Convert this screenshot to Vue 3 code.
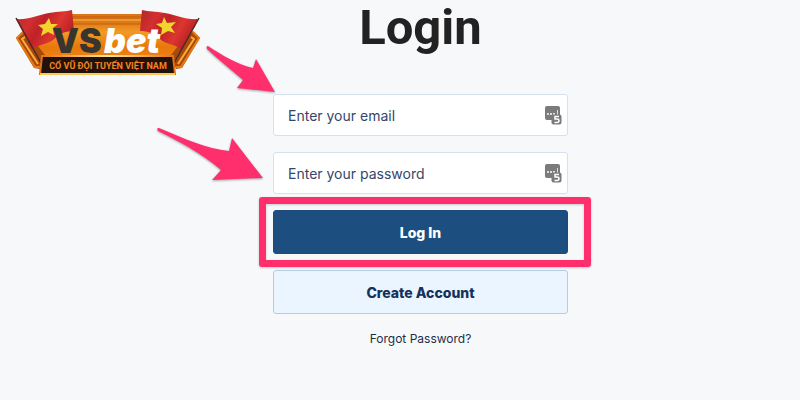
<template>
  <div class="page">
    <svg class="logo" viewBox="0 0 196 76" role="img" aria-label="VSbet">
      <defs>
        <linearGradient id="plate" x1="0" y1="0" x2="0" y2="1">
          <stop offset="0" stop-color="#c9610c" />
          <stop offset="0.35" stop-color="#f39a25" />
          <stop offset="0.65" stop-color="#e8780c" />
          <stop offset="1" stop-color="#f08a18" />
        </linearGradient>
        <linearGradient id="flag" x1="0" y1="0" x2="1" y2="0.4">
          <stop offset="0" stop-color="#b3262a" />
          <stop offset="0.3" stop-color="#d42f30" />
          <stop offset="0.5" stop-color="#bd2227" />
          <stop offset="0.75" stop-color="#dc3630" />
          <stop offset="1" stop-color="#b82024" />
        </linearGradient>
        <linearGradient id="rim" x1="0" y1="0" x2="1" y2="0">
          <stop offset="0" stop-color="#e5700f" />
          <stop offset="0.5" stop-color="#ffe89a" />
          <stop offset="1" stop-color="#e5700f" />
        </linearGradient>
      </defs>
      <!-- main plate -->
      <path d="M60 9 H130 L175 28 L164 60 H28 L18 28 Z" fill="url(#plate)" />
      <path d="M60 10 H130" stroke="#e88a22" stroke-width="1" />
      <path d="M60 15 H130" stroke="#ffbe55" stroke-width="1" />
      <path d="M60 19 H130" stroke="#c95c08" stroke-width="1" />
      <!-- side wings -->
      <path d="M11 26 L4 33 L22 63 L28 64 L33 50 L22 36 Z" fill="#a84a0c" />
      <path d="M11 27 L5 33 L23 62 L28 62" fill="none" stroke="#e87a16" stroke-width="2" />
      <path d="M13 32 L10 34 L26 59" fill="none" stroke="#ffab38" stroke-width="2" />
      <path d="M181 26 L188 33 L170 63 L164 64 L159 50 L170 36 Z" fill="#a84a0c" />
      <path d="M181 27 L187 33 L169 62 L164 62" fill="none" stroke="#e87a16" stroke-width="2" />
      <path d="M179 32 L182 34 L166 59" fill="none" stroke="#ffab38" stroke-width="2" />
      <!-- flags -->
      <path d="M4 14 C16 15 26 10 37 8 C47 6 53 7 60 5 L62 26 C54 26 48 28 42 34 C36 40 28 38 20 45 Z" fill="url(#flag)" />
      <path d="M4 13 L29 58" stroke="#4a2b24" stroke-width="1.500" />
      <path d="M186 14 C174 15 164 10 153 8 C143 6 137 7 130 5 L128 26 C136 26 142 28 148 34 C154 40 162 38 170 45 Z" fill="url(#flag)" />
      <path d="M187 13 L162 58" stroke="#4a2b24" stroke-width="1.500" />
      <path d="M37 13 L39 19 L46 19 L41 23 L42 30 L36 27 L29 31 L31 24 L26 20 L33 19 Z" fill="#f3d42c" />
      <path d="M152 12 L155 18 L164 17 L159 22 L163 28 L156 26 L149 30 L150 23 L144 19 L150 18 Z" fill="#f3d42c" />
      <!-- banner -->
      <path d="M30 51 H161 L163 69 H28 Z" fill="#21130c" stroke="url(#rim)" stroke-width="2" />
      <path d="M28 69 H163" stroke="#ffc65a" stroke-width="2" />
      <text class="logo-dark" x="40" y="48">VS</text>
      <text class="logo-light" x="92" y="48">bet</text>
      <text class="logo-slogan" x="96" y="64" text-anchor="middle">CỔ VŨ ĐỘI TUYỂN VIỆT NAM</text>
    </svg>

    <main class="login">
      <h1 class="title">Login</h1>
      <form class="form" @submit.prevent>
        <div v-for="field in fields" :key="field.name" class="field">
          <input
            v-model="field.value"
            class="input"
            :type="field.name"
            :name="field.name"
            :placeholder="field.label"
            :aria-label="field.label"
          />
          <svg class="key-icon" viewBox="0 0 18 19" aria-hidden="true">
            <rect x="0" y="0" width="15" height="14" rx="2" fill="#7b7b7b" />
            <path d="M2 7h2v2H2zM5 7h2v2H5zM8 7h2v2H8zM12 4h1v5h-1z" fill="#ddd" />
            <rect x="6.500" y="8.500" width="10" height="10" rx="2" fill="#7b7b7b" />
            <path d="M14 10.500H10V13H12Q14 13 14 14.700T12 16.500H9.500" fill="none" stroke="#fff" stroke-width="1.500" />
          </svg>
          <svg :class="['arrow', `arrow-${field.name}`]" :viewBox="field.arrow.box" aria-hidden="true">
            <path :d="field.arrow.path" />
          </svg>
        </div>
        <div class="submit">
          <button type="submit" class="btn btn-primary">Log In</button>
          <span class="highlight"></span>
        </div>
        <button type="button" class="btn btn-secondary">Create Account</button>
      </form>
      <a class="forgot" href="#">Forgot Password?</a>
    </main>
  </div>
</template>

<script setup>
import { reactive } from 'vue';

const fields = reactive([
  {
    name: 'email',
    label: 'Enter your email',
    value: '',
    arrow: {
      box: '0 0 80 60',
      path: 'M8 6 C22 15 38 25 53 28 L56 19 L75 52 L37 48 L43 40 C31 30 18 19 7 9 Q6 6 8 6 Z'
    }
  },
  {
    name: 'password',
    label: 'Enter your password',
    value: '',
    arrow: {
      box: '0 0 120 70',
      path: 'M9 8 C33 18 57 29 79 31 L82 18 L113 58 L62 60 L71 50 C50 32 28 21 8 11 Q6 8 9 8 Z'
    }
  }
]);
</script>

<style>
body {
  margin: 0;
  background: #f7f8fa;
}
</style>

<style scoped>
.page {
  position: relative;
  min-height: 100vh;
  box-sizing: border-box;
  padding-left: 41px;
  background: #f7f8fa;
  font-family: Inter, "Liberation Sans", sans-serif;
  overflow: hidden;
}

.logo {
  position: absolute;
  top: 5px;
  left: 12px;
  width: 196px;
  height: 76px;
}

.logo-dark,
.logo-light {
  font-size: 34px;
  font-weight: 900;
}

.logo-dark {
  fill: #38352f;
}

.logo-light {
  fill: #fff;
  font-style: italic;
}

.logo-slogan {
  fill: #f58220;
  font-family: Roboto, sans-serif;
  font-size: 9px;
  font-weight: 700;
}

.login {
  display: flex;
  flex-direction: column;
  align-items: center;
}

.title {
  margin: 0 0 38px;
  color: #222;
  font-family: Roboto, sans-serif;
  font-size: 49px;
  font-weight: 700;
  line-height: 56px;
}

.form {
  display: flex;
  flex-direction: column;
  gap: 16px;
  width: 100%;
  max-width: 295px;
}

.field,
.submit {
  position: relative;
  display: flex;
}

.input {
  width: 100%;
  height: 42px;
  box-sizing: border-box;
  padding: 0 40px 0 14px;
  border: 1px solid #d3e2ee;
  border-radius: 3px;
  background: #fff;
  color: #34466b;
  font-family: inherit;
  font-size: 14px;
}

.input::placeholder {
  color: #34466b;
  opacity: 1;
}

.key-icon {
  position: absolute;
  top: 12px;
  right: 5px;
  width: 18px;
  height: 19px;
}

.arrow {
  position: absolute;
  fill: #ff2f6d;
  filter: drop-shadow(0 1px 1px rgba(0, 0, 0, 0.35));
  pointer-events: none;
}

.arrow-email {
  top: -54px;
  left: -73px;
  width: 80px;
  height: 60px;
}

.arrow-password {
  top: -32px;
  left: -123px;
  width: 120px;
  height: 70px;
}

.btn {
  width: 100%;
  height: 44px;
  padding: 0;
  border-radius: 3px;
  font-family: inherit;
  font-size: 14px;
  font-weight: 800;
  cursor: pointer;
}

.btn-primary {
  border: 1px solid #1c4c7c;
  background: #1d4e80;
  color: #fff;
}

.btn-secondary {
  border: 1px solid #b3cde5;
  background: #ebf5ff;
  color: #15325b;
}

.highlight {
  position: absolute;
  inset: -13px -23px -13px -14px;
  border: 7px solid #ff2f6d;
  border-radius: 3px;
  filter: drop-shadow(0 1px 1px rgba(0, 0, 0, 0.2));
  pointer-events: none;
}

.forgot {
  margin-top: 16px;
  color: #1b2f4b;
  font-size: 12px;
  line-height: 18px;
  text-decoration: none;
}
</style>
